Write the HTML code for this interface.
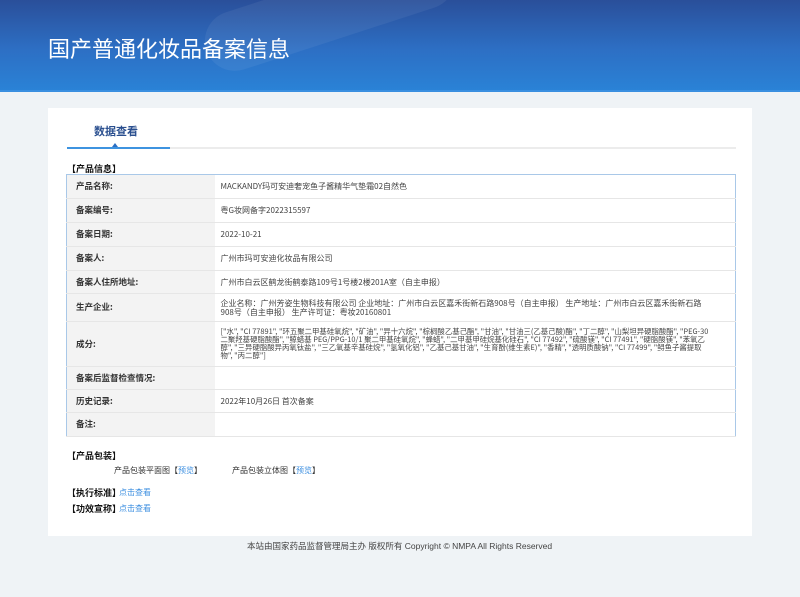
<!DOCTYPE html>
<html><head><meta charset="utf-8"><style>
*{margin:0;padding:0;box-sizing:border-box}
body{width:800px;height:597px;background:#eff3f6;font-family:"Liberation Sans","Noto Sans CJK SC",sans-serif;position:relative;overflow:hidden;color:#333}
.hdr{position:absolute;left:0;top:0;width:800px;height:92px;background:linear-gradient(180deg,#2a4f9a 0%,#2d6fc4 55%,#2a82d6 100%);border-bottom:2px solid #3a8fe0;overflow:hidden}
.hdr .b1{position:absolute;left:200px;top:-20px;width:260px;height:60px;border-radius:40px;background:rgba(255,255,255,.06);transform:rotate(-18deg)}
.hdr h1{position:absolute;left:48px;top:34px;font-size:22px;line-height:28px;font-weight:normal;color:#fff;font-family:"Noto Sans CJK SC",sans-serif}
.card{position:absolute;left:48px;top:108px;width:704px;height:428px;background:#fff}
.tab{position:absolute;left:94px;top:123px;font-size:11px;font-weight:bold;color:#2a4f8f;font-family:"Noto Sans CJK SC",sans-serif}
.tl{position:absolute;left:67px;top:147px;width:669px;height:2px;background:#ececec}
.ta{position:absolute;left:67px;top:147px;width:103px;height:2px;background:#3d93e0}
.tri{position:absolute;left:112px;top:143px;width:0;height:0;border-left:3px solid transparent;border-right:3px solid transparent;border-bottom:4px solid #2a6fc4}
.sec{position:absolute;font-size:9px;font-weight:bold;color:#111;font-family:"Noto Sans CJK SC",sans-serif}
table{position:absolute;left:66px;top:174px;width:670px;border-collapse:collapse;border:1px solid #a9c8e8;font-size:8px;font-family:"Noto Sans CJK SC",sans-serif}
td{border-bottom:1px solid #e6e6e6;vertical-align:middle;line-height:9px}
td.l{width:148px;background:#f3f3f3;padding-left:9px;font-weight:bold;color:#333;font-size:8.5px}
td.v{padding-left:6px;color:#444;padding-right:30px}
.lk{color:#3d8fe0}
.t{position:absolute;font-size:8px;font-family:"Noto Sans CJK SC",sans-serif;color:#333}
.ft{position:absolute;left:247px;top:540px;font-size:8.5px;color:#444;font-family:"Liberation Sans","Noto Sans CJK SC",sans-serif}
</style></head><body>
<div class="hdr"><div class="b1"></div><h1>国产普通化妆品备案信息</h1></div>
<div class="card"></div>
<div class="tab">数据查看</div>
<div class="tl"></div><div class="ta"></div><div class="tri"></div>
<div class="sec" style="left:67px;top:162px">【产品信息】</div>
<table>
<tr style="height:24px"><td class="l">产品名称:</td><td class="v">MACKANDY玛可安迪奢宠鱼子酱精华气垫霜02自然色</td></tr>
<tr style="height:24px"><td class="l">备案编号:</td><td class="v">粤G妆网备字2022315597</td></tr>
<tr style="height:24px"><td class="l">备案日期:</td><td class="v">2022-10-21</td></tr>
<tr style="height:24px"><td class="l">备案人:</td><td class="v">广州市玛可安迪化妆品有限公司</td></tr>
<tr style="height:23px"><td class="l">备案人住所地址:</td><td class="v">广州市白云区鹤龙街鹤泰路109号1号楼2楼201A室（自主申报）</td></tr>
<tr style="height:28px"><td class="l">生产企业:</td><td class="v">企业名称：广州芳姿生物科技有限公司 企业地址：广州市白云区嘉禾街新石路908号（自主申报） 生产地址：广州市白云区嘉禾街新石路908号（自主申报） 生产许可证：粤妆20160801</td></tr>
<tr style="height:45px"><td class="l">成分:</td><td class="v" style="line-height:8px;font-size:7.4px;padding-right:26px">["水", "CI 77891", "环五聚二甲基硅氧烷", "矿油", "异十六烷", "棕榈酸乙基己酯", "甘油", "甘油三(乙基己酸)酯", "丁二醇", "山梨坦异硬脂酸酯", "PEG-30 二聚羟基硬脂酸酯", "鲸蜡基 PEG/PPG-10/1 聚二甲基硅氧烷", "蜂蜡", "二甲基甲硅烷基化硅石", "CI 77492", "硫酸镁", "CI 77491", "硬脂酸镁", "苯氧乙醇", "三异硬脂酸异丙氧钛盐", "三乙氧基辛基硅烷", "氢氧化铝", "乙基己基甘油", "生育酚(维生素E)", "香精", "透明质酸钠", "CI 77499", "鲟鱼子酱提取物", "丙二醇"]</td></tr>
<tr style="height:23px"><td class="l">备案后监督检查情况:</td><td class="v"></td></tr>
<tr style="height:23px"><td class="l">历史记录:</td><td class="v">2022年10月26日 首次备案</td></tr>
<tr style="height:24px"><td class="l">备注:</td><td class="v"></td></tr>
</table>
<div class="sec" style="left:67px;top:449px">【产品包装】</div>
<div class="t" style="left:114px;top:465px">产品包装平面图【<span class="lk">预览</span>】</div>
<div class="t" style="left:232px;top:465px">产品包装立体图【<span class="lk">预览</span>】</div>
<div class="sec" style="left:67px;top:486px">【执行标准】</div><div class="t lk" style="left:119px;top:487px;color:#3d8fe0">点击查看</div>
<div class="sec" style="left:67px;top:502px">【功效宣称】</div><div class="t lk" style="left:119px;top:503px;color:#3d8fe0">点击查看</div>
<div class="ft">本站由国家药品监督管理局主办 版权所有 Copyright © NMPA All Rights Reserved</div>
</body></html>
